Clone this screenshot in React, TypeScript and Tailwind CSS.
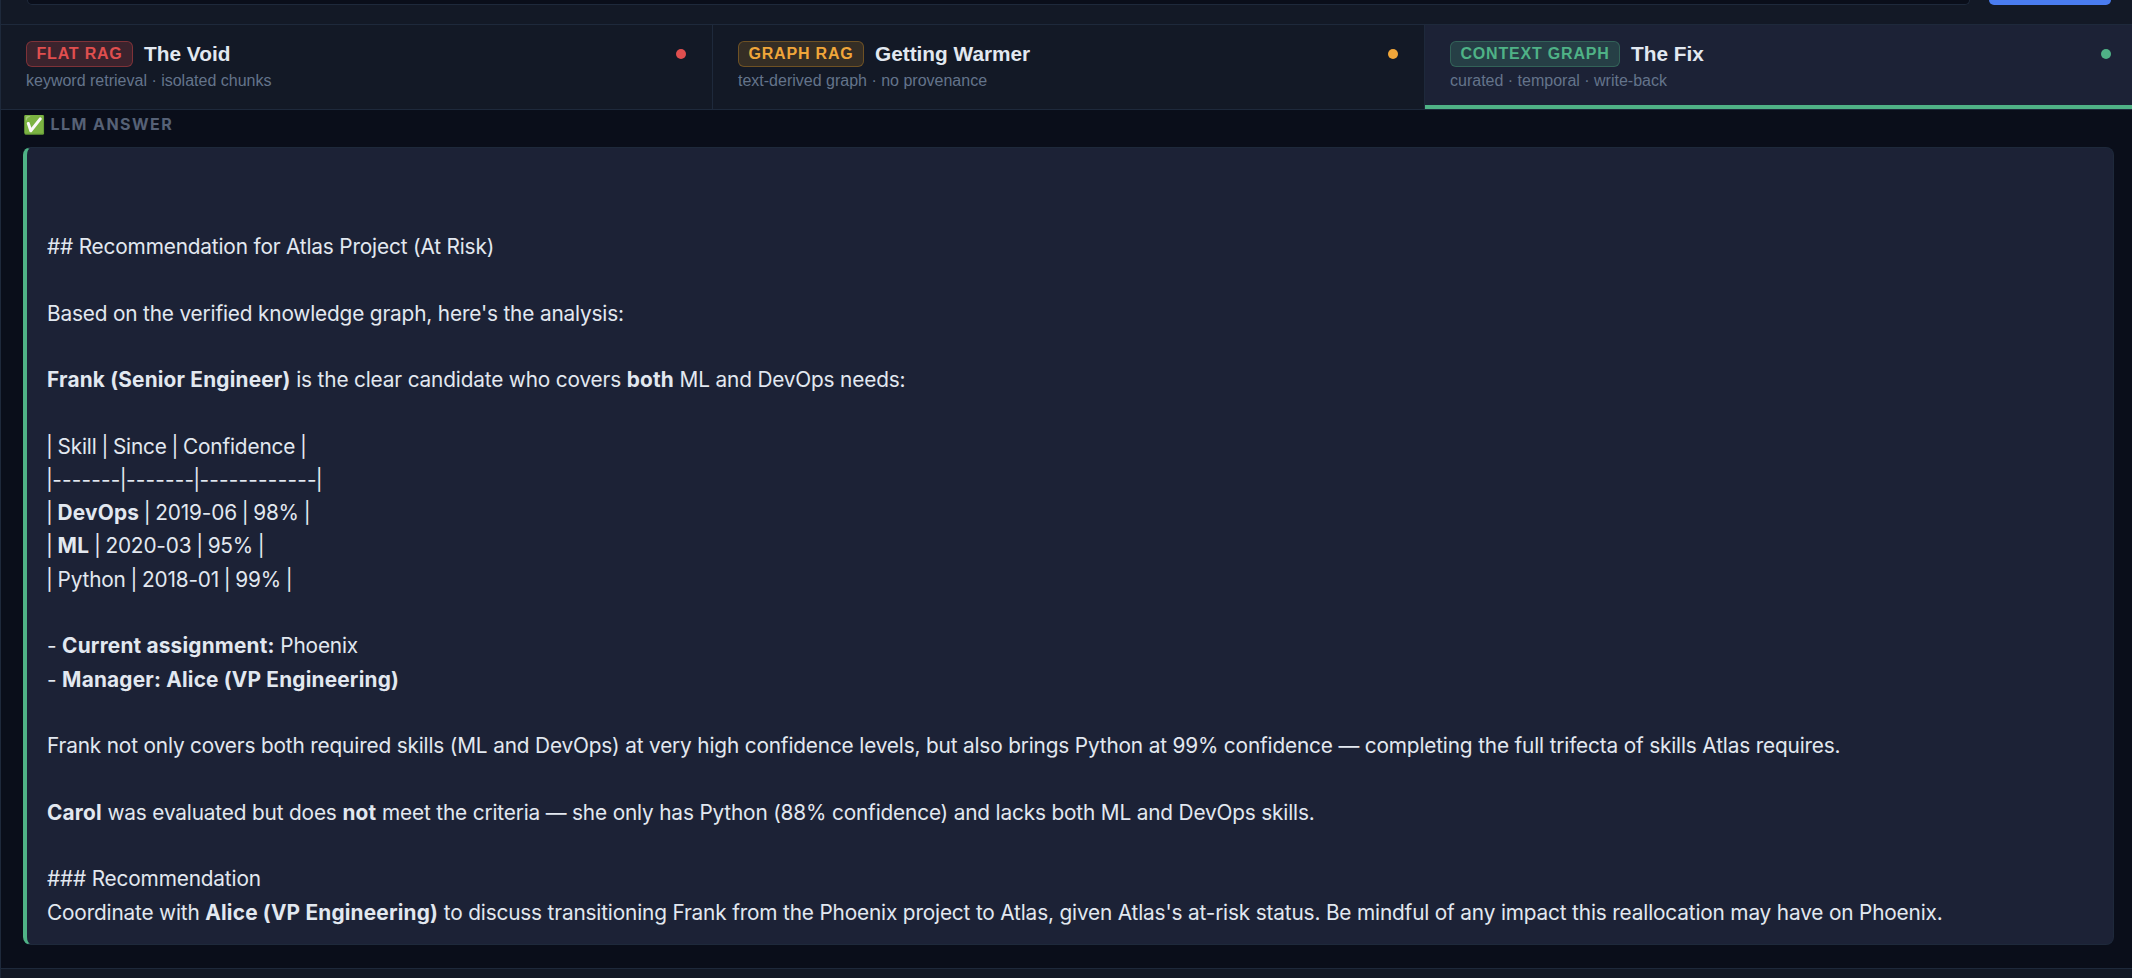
const FONT = "font-['Inter','Noto_Sans',sans-serif]";

const TABS = [
  {
    badge: "FLAT RAG",
    title: "The Void",
    sub: "keyword retrieval · isolated chunks",
    badgeClass: "border-[#e0494966] bg-[#e0494933] text-[#e04f4f]",
    dot: "bg-[#e04f4f]",
    wrap: "w-[712px] border-r border-[#1e293b] bg-[#131926] pr-[26px]",
  },
  {
    badge: "GRAPH RAG",
    title: "Getting Warmer",
    sub: "text-derived graph · no provenance",
    badgeClass: "border-[#f5a6234d] bg-[#f5a62326] text-[#f0a63a]",
    dot: "bg-[#f0a63a]",
    wrap: "w-[712px] border-r border-[#1e293b] bg-[#131926] pr-[26px]",
  },
  {
    badge: "CONTEXT GRAPH",
    title: "The Fix",
    sub: "curated · temporal · write-back",
    badgeClass: "border-[#4fb2864d] bg-[#4fb28633] text-[#4fb286]",
    dot: "bg-[#4fb286]",
    wrap: "flex-1 border-b-4 border-[#4fb286] bg-[#1c2236] pr-[21px]",
  },
];

function Tab({ tab }: { tab: (typeof TABS)[number] }) {
  return (
    <div className={`flex h-full items-start justify-between pl-[25px] pt-[16px] font-['Liberation_Sans',sans-serif] ${tab.wrap}`}>
      <div>
        <div className="flex items-center gap-[11px]">
          <span className={`flex h-[26px] items-center rounded-[6px] border px-[9.5px] text-[16px] font-bold tracking-[0.8px] ${tab.badgeClass}`}>
            {tab.badge}
          </span>
          <span className="text-[20.8px] font-bold leading-[26px] text-[#e2e8f0]">{tab.title}</span>
        </div>
        <div className="mt-[2px] text-[16px] leading-[24px] text-[#64748b]">{tab.sub}</div>
      </div>
      <span className={`mt-[8px] h-[10px] w-[10px] rounded-full ${tab.dot}`} />
    </div>
  );
}

// the pipes in the reference's Inter are narrower than the installed cut
function P() {
  return <span className="mx-[-0.95px]">|</span>;
}

function B({ children }: { children: string }) {
  return <b className="tracking-[0.2px]">{children}</b>;
}

export default function App() {
  const line = "min-h-[33.28px]";
  return (
    <div className={`${FONT} flex h-[978px] flex-col overflow-hidden border-l border-[#1e293b] bg-[#0a0e1a]`}>
      {/* search row, cut off by the top of the shot */}
      <div className="flex h-[25px] shrink-0 items-start gap-[19px] border-b border-[#1e293b] bg-[#131926] pl-[26px] pr-[21px]">
        <div className="h-[5px] flex-1 rounded-b-[8px] border-x border-b border-[#1e293b] bg-[#0a0e1a]" />
        <div className="h-[5px] w-[122px] rounded-b-[8px] bg-[#4a7cf0]" />
      </div>

      <div className="flex h-[85px] shrink-0 border-b border-[#1e293b]">
        {TABS.map((t) => (
          <Tab key={t.badge} tab={t} />
        ))}
      </div>

      <div className="flex-1 pl-[22px] pr-[18px]">
        <div className="mt-[1px] flex h-[26px] items-center gap-[5px] text-[16px] font-bold tracking-[1.45px] text-[#566176]">
          <span className="font-['Noto_Color_Emoji','DejaVu_Sans',sans-serif] text-[18px] tracking-normal text-[#4fb286]">✅</span>
          LLM ANSWER
        </div>
        <div className="mt-[10px] h-[798px] rounded-[8px] border border-l-4 border-[#1e293b] border-l-[#4fb286] bg-[#1c2236] px-[20px] pt-[82px] text-[20.8px] leading-[33.28px] tracking-[-0.165px] text-[#e2e8f0]">
          <div className={line}>## Recommendation for Atlas Project (At Risk)</div>
          <div className={line} />
          <div className={line}>Based on the verified knowledge graph, here's the analysis:</div>
          <div className={line} />
          <div className={line}><B>Frank (Senior Engineer)</B> is the clear candidate who covers <B>both</B> ML and DevOps needs:</div>
          <div className={line} />
          <div className={line}><P /> Skill <P /> Since <P /> Confidence <P /></div>
          <div className={`${line} tracking-[0.2px]`}><P />-------<P />-------<P />------------<P /></div>
          <div className={line}><P /> <B>DevOps</B> <P /> 2019-06 <P /> 98% <P /></div>
          <div className={line}><P /> <B>ML</B> <P /> 2020-03 <P /> 95% <P /></div>
          <div className={line}><P /> Python <P /> 2018-01 <P /> 99% <P /></div>
          <div className={line} />
          <div className={line}>- <B>Current assignment:</B> Phoenix</div>
          <div className={line}>- <B>Manager: Alice (VP Engineering)</B></div>
          <div className={line} />
          <div className={line}>Frank not only covers both required skills (ML and DevOps) at very high confidence levels, but also brings Python at 99% confidence — completing the full trifecta of skills Atlas requires.</div>
          <div className={line} />
          <div className={line}><B>Carol</B> was evaluated but does <B>not</B> meet the criteria — she only has Python (88% confidence) and lacks both ML and DevOps skills.</div>
          <div className={line} />
          <div className={line}>### Recommendation</div>
          <div className={line}>Coordinate with <B>Alice (VP Engineering)</B> to discuss transitioning Frank from the Phoenix project to Atlas, given Atlas's at-risk status. Be mindful of any impact this reallocation may have on Phoenix.</div>
        </div>
      </div>

      <div className="h-[10px] shrink-0 border-t border-[#1e293b] bg-[#131926]" />
    </div>
  );
}
